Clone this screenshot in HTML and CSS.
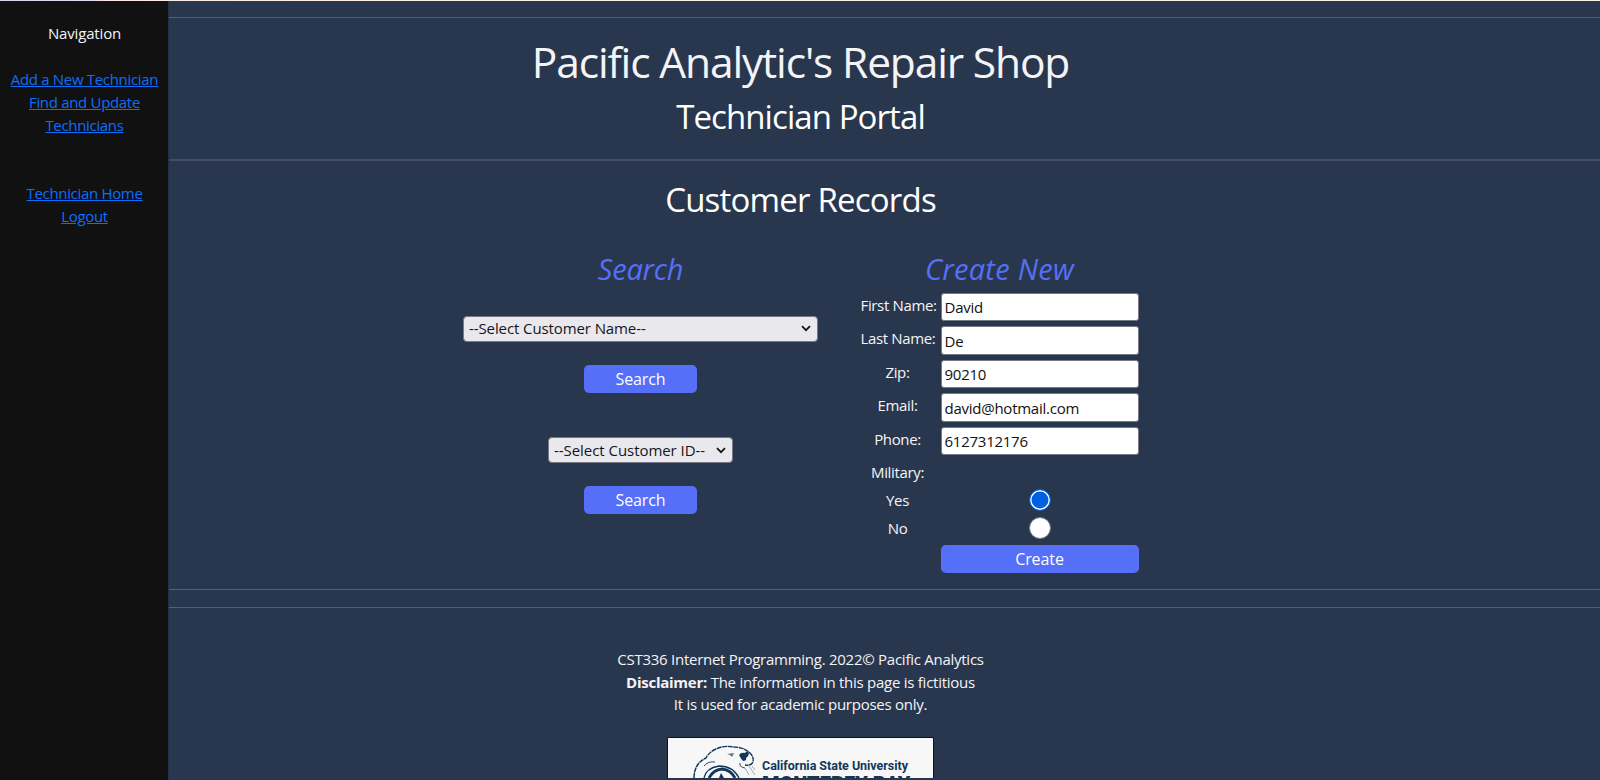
FILE: index.html
```html
<!DOCTYPE html>
<html lang="en">
<head>
<meta charset="utf-8">
<title>Technician Portal</title>
<link rel="stylesheet" href="styles.css">
</head>
<body>
<div class="topline"></div>
<div class="shell">
  <nav class="sidebar">
    <div class="nav-title">Navigation</div>
    <div class="nav-group">
      <a href="#">Add a New Technician</a>
      <a href="#">Find and Update<br>Technicians</a>
    </div>
    <div class="nav-group">
      <a href="#">Technician Home</a>
      <a href="#">Logout</a>
    </div>
  </nav>
  <main class="main">
    <header class="header">
      <h1>Pacific Analytic's Repair Shop</h1>
      <h2>Technician Portal</h2>
    </header>
    <section class="records">
      <h2 class="records-title">Customer Records</h2>
      <div class="columns">
        <div class="search">
          <h3>Search</h3>
          <div class="select wide"><span>--Select Customer Name--</span><svg width="10" height="7" viewBox="0 0 10 7"><path d="M1 1.2 5 5.2 9 1.2"/></svg></div>
          <button class="btn">Search</button>
          <div class="select narrow"><span>--Select Customer ID--</span><svg width="10" height="7" viewBox="0 0 10 7"><path d="M1 1.2 5 5.2 9 1.2"/></svg></div>
          <button class="btn">Search</button>
        </div>
        <form class="create">
          <h3 class="create-title">Create New</h3>
          <div class="grid">
            <label>First Name:</label><input value="David">
            <label>Last Name:</label><input value="De">
            <label>Zip:</label><input value="90210">
            <label>Email:</label><input value="david@hotmail.com">
            <label>Phone:</label><input value="6127312176">
            <label>Military:</label><span></span>
          </div>
          <div class="grid radios">
            <label>Yes</label><span class="radio on"></span>
            <label>No</label><span class="radio"></span>
          </div>
          <button class="btn submit" type="button">Create</button>
        </form>
      </div>
    </section>
    <footer class="footer">
      <p>CST336 Internet Programming. 2022© Pacific Analytics</p>
      <p><b>Disclaimer:</b> The information in this page is fictitious</p>
      <p>It is used for academic purposes only.</p>
      <div class="logo">
        <svg width="66" height="40" viewBox="0 0 66 40">
          <g fill="none" stroke="#12365c">
            <path stroke-width="1.4" stroke-dasharray="5 .6" d="M1 40Q1 31 6 25Q9 22 13 20Q16 14 23 11Q31 7 41 9Q50 9 57 15Q61 19 60 24Q58 28 52 27"/>
            <path d="M11 40Q13 30 26 28Q40 28 46 40" stroke-width="1.3"/>
            <path d="M16 40Q20 32 29 31Q38 32 42 40" stroke-width="2.8"/>
            <path d="M11 28Q15 23 22 24M47 25Q46 29 52 30" stroke-width=".9"/>
            <path d="M56 28 62 37M59 28 62 32M52 30 56 37" stroke="#8c9aaa" stroke-width=".8"/>
          </g>
          <path fill="#12365c" d="M46 17Q48 14 52 15Q54 12 56 15Q56 18 53 20Q54 23 50 23Q48 21 46 17ZM26 40 28 35 31 40"/>
          <path fill="#5b7189" d="M34 16 41 15 39 19 37 17Z"/>
        </svg>
        <div class="logo-text"><span class="l1">California State University</span><span class="l2">MONTEREY BAY</span></div>
      </div>
    </footer>
  </main>
</div>
</body>
</html>
```
FILE: styles.css
```css
* { box-sizing: border-box; }
body {
  margin: 0; height: 780px; overflow: hidden;
  background: #29374e; color: #f4f4f6;
  font: 15px/22.8px "Open Sans", "Noto Sans", sans-serif;
  letter-spacing: -.26px; text-align: center; white-space: nowrap;
}
h1, h2, h3, p { margin: 0; font-weight: 400; }
.topline { height: 1px; background: linear-gradient(90deg, #d8d3f0 0, #e4d8f5 90px, #fbe9e4 110px, #fbf3e6 400px); }
.shell { display: flex; height: 779px; }
.sidebar { width: 168px; flex: none; background: #111; padding: 21.4px 0 0 1px; }
.nav-title { letter-spacing: -.15px; }
.nav-group { display: flex; flex-direction: column; align-items: center; margin-top: 22.8px; letter-spacing: -.32px; }
.nav-group + .nav-group { margin-top: 45.6px; }
.nav-group a { color: #0d6efd; text-decoration: underline; }
.main { flex: 1; min-width: 0; border-left: 1px solid #22304a; overflow: hidden; }
.header, .records, .footer { padding-right: 168px; }
.header { margin-top: 15.5px; height: 144px; border-top: 1px solid #525f79; border-bottom: 2px solid #414d68; padding-top: 18px; }
h1 { font-size: 42.5px; line-height: 51px; letter-spacing: -1.15px; }
h2 { font-size: 33px; line-height: 40px; letter-spacing: -.92px; color: #fff; }
.header h2 { margin-top: 10px; }
.records { height: 429px; border-bottom: 1px solid #525f79; }
.records-title { padding-top: 19px; letter-spacing: -.8px; }
.columns { display: flex; justify-content: center; padding-top: 32px; }
h3 { color: #5570f8; font-style: italic; font-size: 29px; line-height: 34px; letter-spacing: -.2px; }
.search { width: 356px; display: flex; flex-direction: column; align-items: center; }
.create { width: 278px; margin-left: 42px; }
.create-title { letter-spacing: .25px; }
.select {
  display: flex; align-items: center; justify-content: space-between; height: 26px;
  background: #e9e9ed; color: #15151a; border: 1px solid #777987; border-radius: 4px; padding: 0 6px 0 5px; margin-top: 30px;
}
.select svg path { fill: none; stroke: #111; stroke-width: 1.7; }
.wide { width: 355px; letter-spacing: -.1px; }
.narrow { width: 185px; margin-top: 44.8px; letter-spacing: -.05px; }
.btn {
  width: 113px; height: 28px; margin-top: 23px; padding: 1px 0 0; border: 0; border-radius: 5px;
  background: #556ff8; color: #fff; font: 16px/27px "Open Sans", sans-serif; letter-spacing: -.1px;
}
.grid { display: grid; grid-template-columns: 80px 198px; row-gap: 5.2px; margin-top: 7.5px; }
.grid label { line-height: 25px; padding-right: 6px; letter-spacing: -.35px; }
.grid input {
  width: 198px; height: 28.3px; margin: 0; border: 1px solid #777987; border-radius: 3px; background: #fff; color: #111;
  font: 15px "Open Sans", sans-serif; letter-spacing: -.25px; padding: 0 3px;
}
.grid.radios { row-gap: 6px; margin-top: 4px; }
.radios label { line-height: 23px; height: 22px; }
.radio { width: 22px; height: 22px; border-radius: 50%; border: 1.5px solid #777987; background: #fff; justify-self: center; }
.radio.on { border-color: #0060df; background: #0060df; box-shadow: inset 0 0 0 1.5px #fff; }
.submit { display: block; width: 198px; margin: 6px 0 0 80px; }
.footer { margin-top: 17px; border-top: 1px solid #525f79; padding-top: 40.4px; display: flex; flex-direction: column; align-items: center; }
.logo { display: flex; width: 267px; height: 41px; margin-top: 21px; background: #f7f7f8; border: 1px solid #07123a; border-bottom: 0; border-radius: 2px 2px 0 0; padding-left: 25px; overflow: hidden; }
.logo svg { flex: none; }
.logo-text { display: flex; flex-direction: column; align-items: flex-start; color: #12365c; padding: 20px 0 0 3px; font-family: Roboto, sans-serif; font-weight: 700; }
.l1 { font-size: 12.5px; line-height: 16px; letter-spacing: -.03px; }
.l2 { font-size: 20px; line-height: 20px; font-weight: 900; letter-spacing: 0; }
```
